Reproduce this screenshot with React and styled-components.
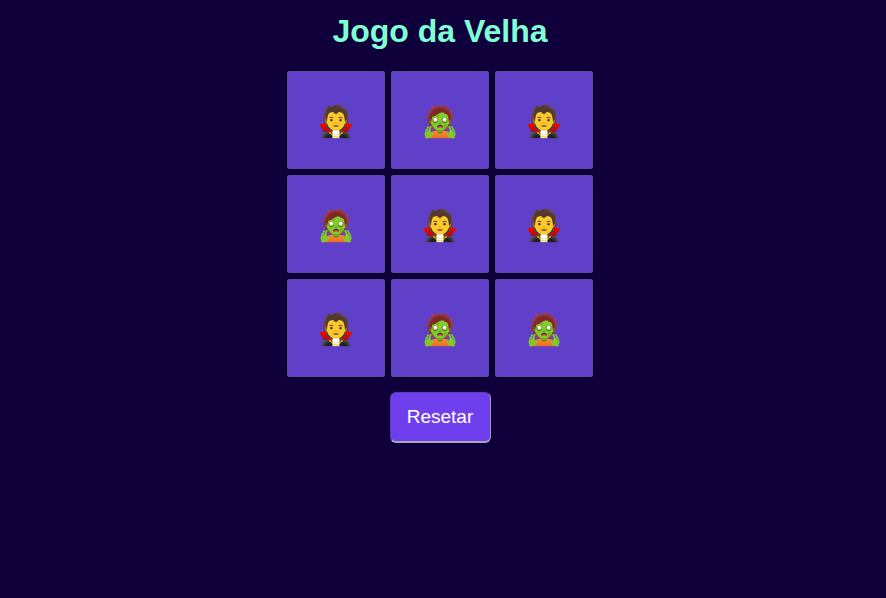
import React from "react";
import styled, { createGlobalStyle } from "styled-components";

const Global = createGlobalStyle`
  html, body { margin: 0; padding: 0; background: #0f003c; }
  body { font-family: "Liberation Sans", Arial, sans-serif; }
`;
const Page = styled.main`
  width: 880px; height: 598px; background: #0f003c; display: flex; flex-direction: column; align-items: center;
`;
const Title = styled.h1`
  margin: 11px 0 19px; font-size: 32px; line-height: 40px; font-weight: 700; color: #7fffd4;
`;
const Board = styled.div`
  display: grid; grid-template-columns: repeat(3, 100px); grid-auto-rows: 100px; gap: 4px;
`;
const Cell = styled.button`
  width: 100px; height: 100px; padding: 2px 0 0 1px; box-sizing: border-box; background: #6040c8; border: 1px solid #000;
  border-radius: 3px; font-size: 30.5px; display: flex; align-items: center; justify-content: center;
  font-family: "Liberation Sans", "Noto Color Emoji", sans-serif;
`;
const Reset = styled.button`
  margin-top: 14px; width: 101px; height: 51px; box-sizing: border-box; background: #6f3fee; color: #fff; padding: 0 0 1px;
  font: 19px "Liberation Sans", Arial, sans-serif; border-style: solid; border-width: 1px 1px 2px 1px;
  border-color: #5a3bb8 #9d9aab #a9a9b5 #5a3bb8; border-radius: 6px;
`;
const cells = ["🧛","🧟","🧛","🧟","🧛","🧛","🧛","🧟","🧟"];
export default function App() {
  return (<><Global /><Page><Title>Jogo da Velha</Title><Board>{cells.map((c, i) => <Cell key={i}>{c}</Cell>)}</Board><Reset>Resetar</Reset></Page></>);
}
